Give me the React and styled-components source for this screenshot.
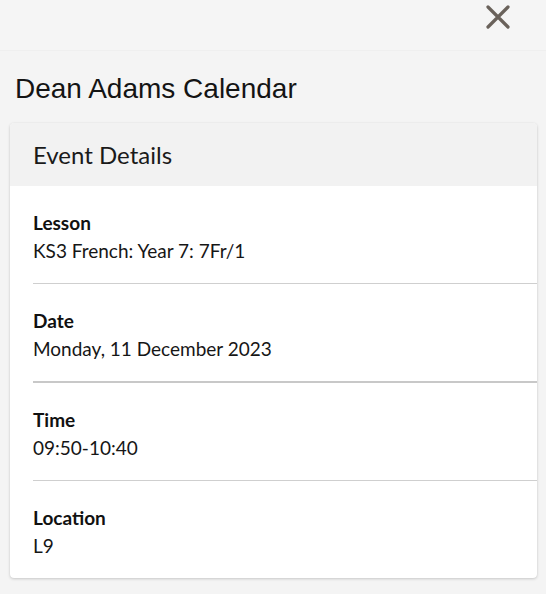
import React from "react";
import styled, { createGlobalStyle } from "styled-components";

const GlobalStyle = createGlobalStyle`
  html, body {
    margin: 0;
    padding: 0;
    background: #f4f4f4;
  }
  body {
    font-family: Lato, "Open Sans", sans-serif;
    color: #111;
  }
`;

const details = [
  { label: "Lesson", value: "KS3 French: Year 7: 7Fr/1" },
  { label: "Date", value: "Monday, 11 December 2023", heavy: true },
  { label: "Time", value: "09:50-10:40" },
  { label: "Location", value: "L9" },
];

const CloseIcon = () => (
  <svg width="28" height="28" viewBox="0 0 28 28">
    <path
      d="M4 4 L24 24 M24 4 L4 24"
      stroke="#6a625b"
      strokeWidth="3.2"
      strokeLinecap="round"
      fill="none"
    />
  </svg>
);

const App = () => (
  <Page>
    <GlobalStyle />
    <TopBar>
      <CloseButton aria-label="Close">
        <CloseIcon />
      </CloseButton>
    </TopBar>
    <Title>Dean Adams Calendar</Title>
    <Card>
      <CardHeader>Event Details</CardHeader>
      <List>
        {details.map((d, i) => (
          <Row key={d.label} $last={i === details.length - 1} $heavy={d.heavy}>
            <Label>{d.label}</Label>
            <Value>{d.value}</Value>
          </Row>
        ))}
      </List>
    </Card>
  </Page>
);

const Page = styled.div`
  width: 546px;
  min-height: 594px;
  background: #f4f4f4;
`;

const TopBar = styled.div`
  height: 50px;
  background: #f5f5f5;
  border-bottom: 1px solid #efefef;
  display: flex;
  justify-content: flex-end;
  align-items: flex-start;
  padding-right: 34px;
`;

const CloseButton = styled.button`
  border: none;
  background: none;
  padding: 0;
  margin-top: 3px;
  display: flex;
  cursor: pointer;
`;

const Title = styled.h1`
  margin: 0 0 16px;
  padding: 20px 0 0 15px;
  font-family: "Liberation Sans", Arial, sans-serif;
  font-weight: 400;
  font-size: 28px;
  line-height: 36px;
  color: #141414;
`;

const Card = styled.div`
  margin: 0 9px 0 10px;
  background: #fff;
  border-radius: 4px;
  box-shadow: 0 1px 3px rgba(0, 0, 0, 0.18), 0 0 1px rgba(0, 0, 0, 0.08);
  overflow: hidden;
`;

const CardHeader = styled.div`
  height: 63px;
  background: #f2f2f2;
  display: flex;
  align-items: center;
  padding-left: 23px;
  font-size: 24px;
  color: #1a1a1a;
`;

const List = styled.div`
  padding-left: 23px;
`;

const Row = styled.div`
  box-sizing: border-box;
  height: ${(p) => (p.$last ? "97px" : p.$heavy ? "99px" : "98px")};
  padding-top: 4px;
  display: flex;
  flex-direction: column;
  justify-content: center;
  border-bottom: ${(p) =>
    p.$last ? "none" : p.$heavy ? "2px solid #c8c8c8" : "1px solid #cfcfcf"};
`;

const Label = styled.div`
  font-weight: 700;
  font-size: 19px;
  line-height: 28px;
  color: #111;
`;

const Value = styled.div`
  font-size: 19px;
  line-height: 28px;
  color: #161616;
`;

export default App;
